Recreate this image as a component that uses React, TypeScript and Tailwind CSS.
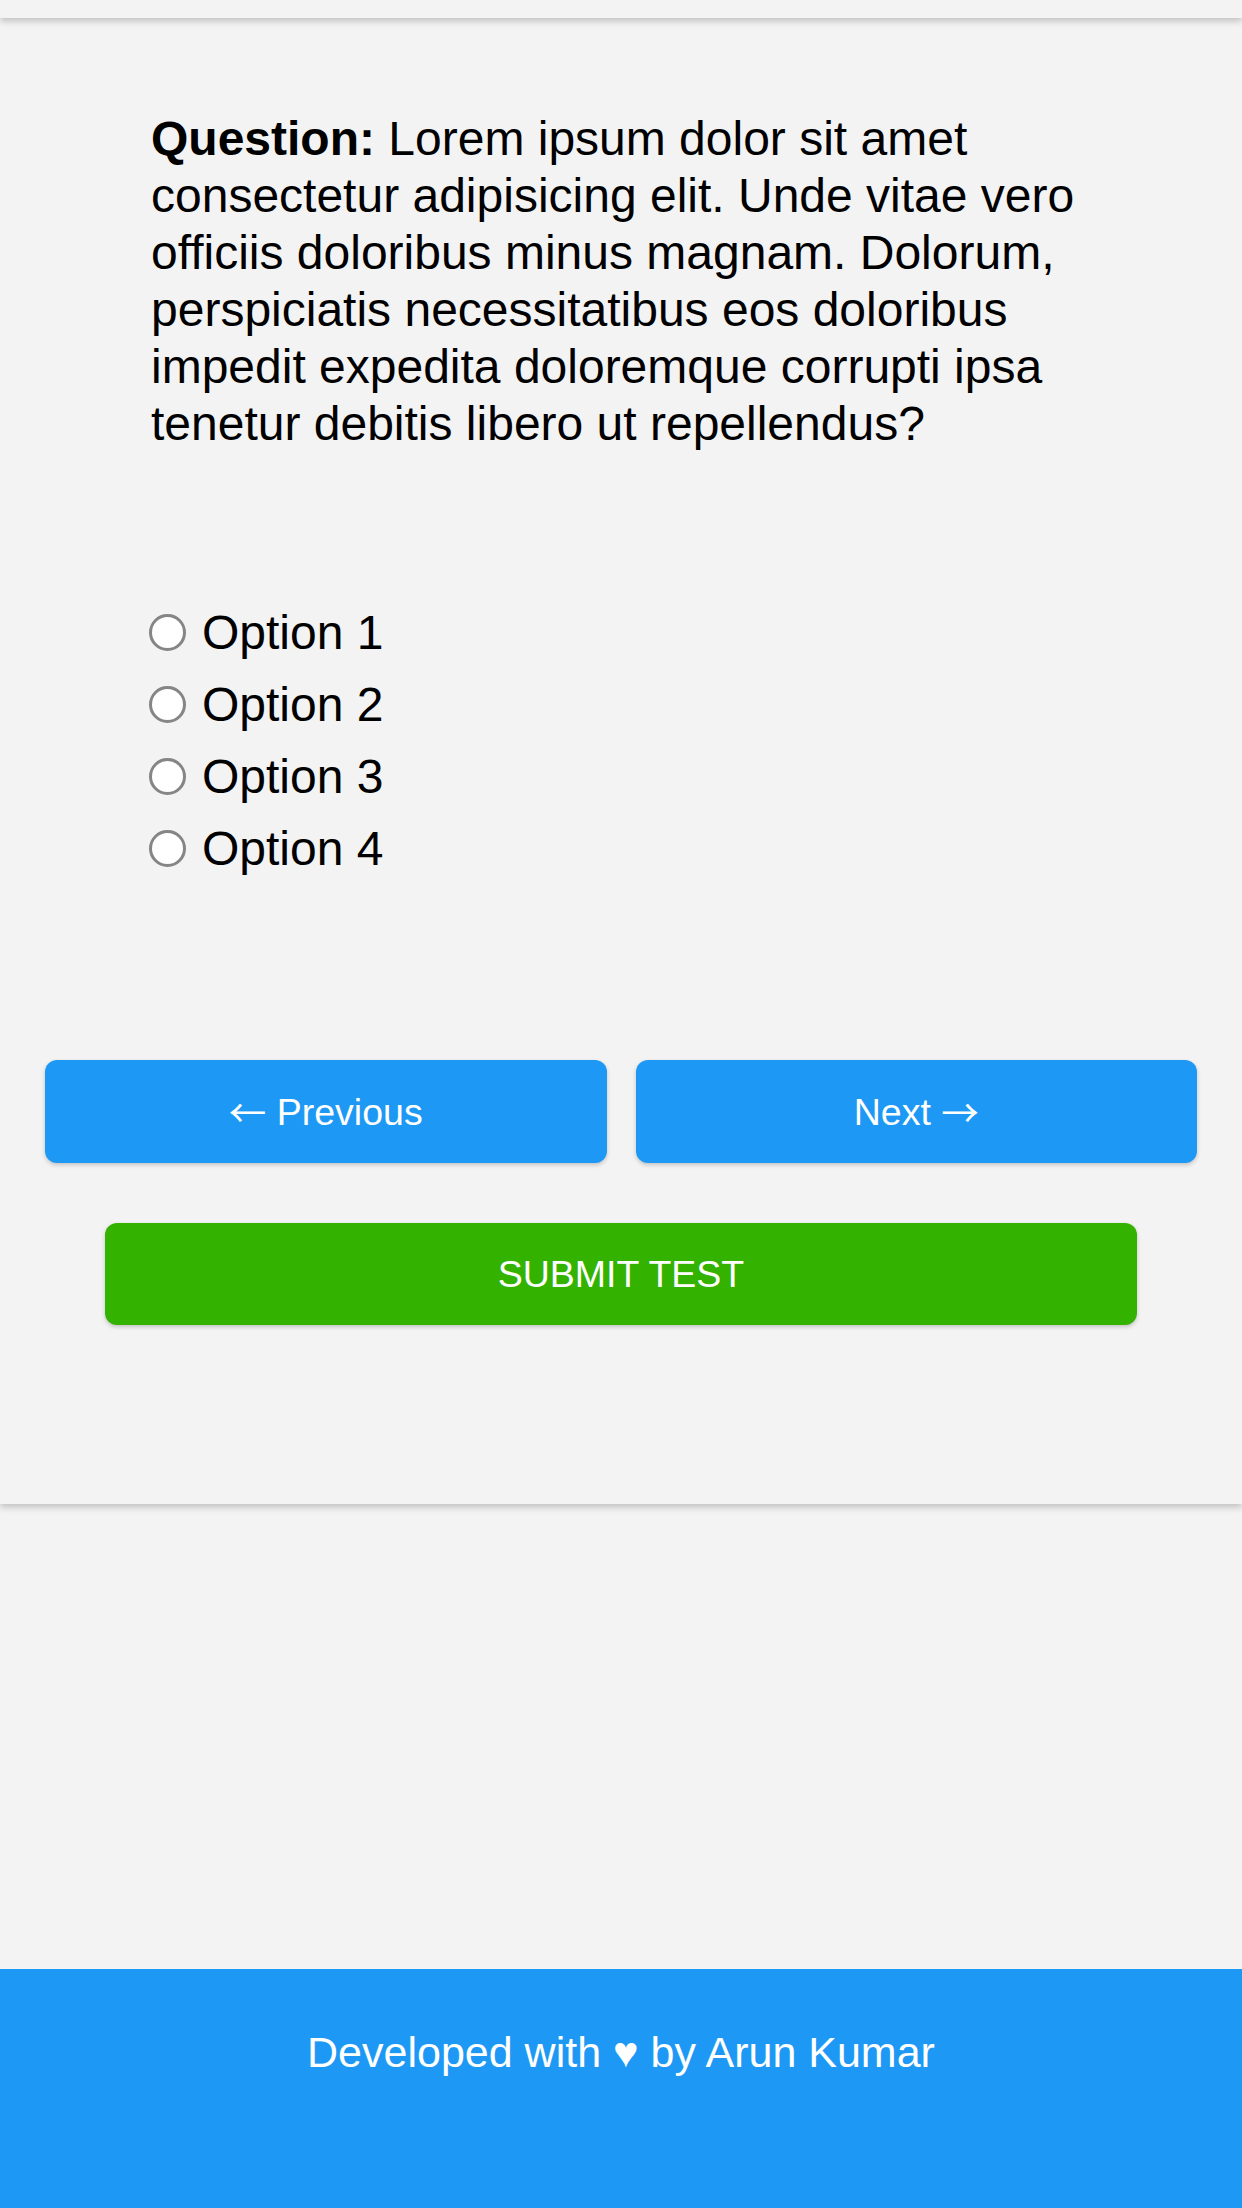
import React, { useState } from 'react';

const options = ['Option 1', 'Option 2', 'Option 3', 'Option 4'];

const App = () => {
  const [selected, setSelected] = useState<string | null>(null);

  return (
    <div className="min-h-[2208px] bg-[#f3f3f3] font-['Liberation_Sans',Arial,sans-serif] text-black flex flex-col">
      {/* top bar */}
      <div className="relative z-10 h-[18px] bg-[#f3f3f3] shadow-[0_3px_7px_rgba(0,0,0,0.22)]" />

      {/* question card */}
      <section className="bg-[#f3f3f3] shadow-[0_3px_7px_rgba(0,0,0,0.22)] pt-[92px] pb-[179px]">
        <p className="px-[151px] text-[48px] leading-[57px]">
          <span className="font-bold">Question:</span> Lorem ipsum dolor sit amet consectetur adipisicing elit.
          Unde vitae vero officiis doloribus minus magnam. Dolorum, perspiciatis necessitatibus eos doloribus
          impedit expedita doloremque corrupti ipsa tenetur debitis libero ut repellendus?
        </p>

        <div className="mt-[152px] px-[149px] flex flex-col gap-[15px]">
          {options.map((opt) => (
            <label key={opt} className="h-[57px] flex items-center gap-[16px] cursor-pointer">
              <input
                type="radio"
                name="answer"
                checked={selected === opt}
                onChange={() => setSelected(opt)}
                className="appearance-none w-[37px] h-[37px] rounded-full border-[3px] border-[#858585] bg-white checked:border-[11px] checked:border-[#1d99f5]"
              />
              <span className="text-[48px] leading-[57px]">{opt}</span>
            </label>
          ))}
        </div>

        <div className="mt-[183px] px-[45px] flex gap-[29px]">
          <button className="flex-1 h-[103px] rounded-[12px] bg-[#1d99f5] text-white text-[37.5px] leading-[43px] shadow-[0_2px_4px_rgba(0,0,0,0.2)]">
            <span className="font-['Noto_Sans_CJK_SC',sans-serif] leading-none relative top-[2px]">←</span> Previous
          </button>
          <button className="flex-1 h-[103px] rounded-[12px] bg-[#1d99f5] text-white text-[37.5px] leading-[43px] shadow-[0_2px_4px_rgba(0,0,0,0.2)]">
            Next <span className="font-['Noto_Sans_CJK_SC',sans-serif] leading-none relative top-[2px]">→</span>
          </button>
        </div>

        <div className="mt-[60px] px-[105px]">
          <button className="w-full h-[102px] rounded-[12px] bg-[#33b200] text-white text-[37.5px] shadow-[0_2px_4px_rgba(0,0,0,0.2)]">
            SUBMIT TEST
          </button>
        </div>
      </section>

      <div className="flex-1" />

      <footer className="h-[239px] bg-[#1d99f5] text-white text-center text-[43px] pt-[51px]">
        Developed with ♥ by Arun Kumar
      </footer>
    </div>
  );
};

export default App;
